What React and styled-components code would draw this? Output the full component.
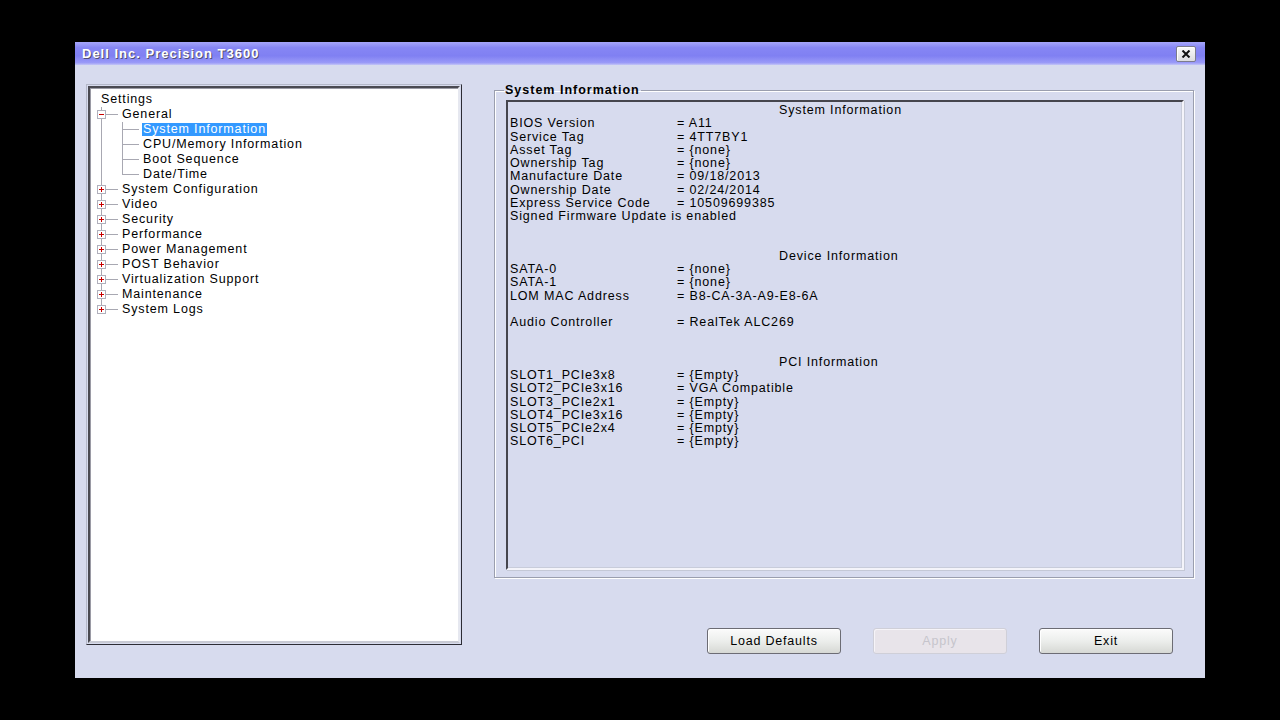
import React from 'react';
import styled, { createGlobalStyle } from 'styled-components';

// --- page ---
const GlobalStyle = createGlobalStyle`
  html, body {
    margin: 0;
    padding: 0;
    background: #000;
  }
  body {
    font-family: "Liberation Sans", Arial, sans-serif;
  }
`;

const Screen = styled.div`
  width: 1280px;
  height: 720px;
  box-sizing: border-box;
  padding: 42px 0 0 75px;
  background: #000;
`;

const Window = styled.div`
  width: 1130px;
  height: 636px;
  display: flex;
  flex-direction: column;
  background: #d7dbee;
`;

const TitleBar = styled.div`
  height: 23px;
  flex: none;
  display: flex;
  align-items: center;
  justify-content: space-between;
  padding: 0 9px 0 7px;
  background: linear-gradient(to bottom, #a6a6fa 0%, #8686f4 25%, #8080f2 60%, #9a9af8 90%, #c4c6f6 100%);
`;

const TitleText = styled.div`
  color: #fff;
  font-weight: bold;
  font-size: 13px;
  letter-spacing: 1px;
  text-shadow: 1px 1px 0 #505070;
`;

const CloseButton = styled.div`
  width: 18px;
  height: 14px;
  display: flex;
  align-items: center;
  justify-content: center;
  border: 1px solid #7c7c8c;
  border-radius: 2px;
  background: linear-gradient(to bottom, #fafafa, #dcdce0);
  box-shadow: inset 1px 1px 0 #fff;
`;

const Body = styled.div`
  flex: 1;
  display: grid;
  grid-template-columns: 376px 1fr;
  gap: 32px;
  padding: 19px 11px 0 11px;
`;

// --- left tree ---
const TreeFrame = styled.div`
  height: 561px;
  box-sizing: border-box;
  border: 1px solid;
  border-color: #b4b8c8 #2c2c34 #2c2c34 #b4b8c8;
  padding: 1px;
`;

const TreeBox = styled.div`
  height: 100%;
  box-sizing: border-box;
  border: 2px solid;
  border-color: #4a4a52 #e6e8f0 #c8cad4 #4a4a52;
  background: #fff;
  padding: 4px 0 0 3px;
  box-shadow: inset 1px 1px 0 #9a9aa4;
`;

const TreeRow = styled.div`
  display: flex;
  align-items: center;
  height: 15px;
`;

const TreeLabel = styled.span`
  margin-left: ${p => (p.$root ? 7 : 3)}px;
  padding: 0 1px;
  font-size: 12.5px;
  line-height: 13px;
  letter-spacing: 0.85px;
  white-space: nowrap;
  color: ${p => (p.$selected ? '#fff' : '#000')};
  background: ${p => (p.$selected ? '#3399ff' : 'transparent')};
`;

const LINE = '#a8a8b2';

const Connector = ({ kind, expander }) => (
  <svg width="25" height="15" style={{ display: 'block', flex: 'none' }} shapeRendering="crispEdges">
    {kind !== 'none' && (
      <rect x="8" y="0" width="1" height={kind === 'last' ? 8 : 15} fill={LINE} />
    )}
    {(kind === 'tee' || kind === 'last') && (
      <rect x="8" y="7" width="17" height="1" fill={LINE} />
    )}
    {expander && (
      <g>
        <rect x="4.5" y="3.5" width="8" height="8" fill="#fff" stroke="#b0b0bc" />
        <rect x="6" y="7" width="5" height="1" fill="#c80000" />
        {expander === 'plus' && <rect x="8" y="5" width="1" height="5" fill="#c80000" />}
      </g>
    )}
  </svg>
);

const PassCell = styled.div`
  width: 21px;
  height: 15px;
  flex: none;
  background: linear-gradient(${LINE}, ${LINE}) no-repeat 8px 0 / 1px 15px;
`;

const topLevel = [
  'System Configuration', 'Video', 'Security', 'Performance', 'Power Management',
  'POST Behavior', 'Virtualization Support', 'Maintenance', 'System Logs',
];

const generalChildren = ['System Information', 'CPU/Memory Information', 'Boot Sequence', 'Date/Time'];

// --- right side ---
const RightCol = styled.div`
  display: flex;
  flex-direction: column;
`;

const Group = styled.fieldset`
  margin: -1px 0 0 0;
  padding: 2px 9px 7px 11px;
  border: 1px solid #9a9eae;
  box-shadow: inset 1px 1px 0 #fff, 1px 1px 0 #fff;
  min-width: 0;
`;

const Legend = styled.legend`
  margin-left: -2px;
  padding: 0 1px;
  font-weight: bold;
  font-size: 12.5px;
  line-height: 15px;
  letter-spacing: 1px;
  color: #000;
`;

const InfoBox = styled.div`
  height: 470px;
  box-sizing: border-box;
  border: 2px solid;
  border-color: #45454d #f4f4fa #f4f4fa #45454d;
  box-shadow: 1px 1px 0 #c4c8d6, inset -1px -1px 0 #c8ccda;
  padding: 2px 2px 0 2px;
  font-size: 12.5px;
  letter-spacing: 0.85px;
  line-height: 13.25px;
  color: #000;
`;

const InfoRow = styled.div`
  display: grid;
  grid-template-columns: 167px 1fr;
  height: 13.25px;
  white-space: nowrap;
`;

const SectionTitle = styled.div`
  height: 13.25px;
  padding-left: 269px;
  white-space: nowrap;
`;

const Blank = styled.div`
  height: ${p => p.$lines * 13.25}px;
`;

const Line = styled.div`
  height: 13.25px;
  white-space: nowrap;
`;

const ButtonRow = styled.div`
  display: flex;
  justify-content: flex-end;
  gap: 32px;
  margin-top: 50px;
  padding-right: 21px;
`;

const Button = styled.div`
  width: 134px;
  height: 26px;
  box-sizing: border-box;
  display: flex;
  align-items: center;
  justify-content: center;
  font-size: 12.5px;
  letter-spacing: 0.8px;
  border-radius: 3px;
  border: 1px solid ${p => (p.$disabled ? '#cfcfd8' : '#6c6c74')};
  color: ${p => (p.$disabled ? '#c6c4cc' : '#000')};
  background: ${p => (p.$disabled
    ? '#e8e4ea'
    : 'linear-gradient(to bottom, #fbfbfb 0%, #eceeec 50%, #d6d8d4 100%)')};
  box-shadow: ${p => (p.$disabled ? 'inset 1px 1px 0 #f6f4f8' : 'inset 1px 1px 0 #fff')};
`;

const sysInfo = [
  ['BIOS Version', '= A11'],
  ['Service Tag', '= 4TT7BY1'],
  ['Asset Tag', '= {none}'],
  ['Ownership Tag', '= {none}'],
  ['Manufacture Date', '= 09/18/2013'],
  ['Ownership Date', '= 02/24/2014'],
  ['Express Service Code', '= 10509699385'],
];

const pciInfo = [
  ['SLOT1_PCIe3x8', '= {Empty}'],
  ['SLOT2_PCIe3x16', '= VGA Compatible'],
  ['SLOT3_PCIe2x1', '= {Empty}'],
  ['SLOT4_PCIe3x16', '= {Empty}'],
  ['SLOT5_PCIe2x4', '= {Empty}'],
  ['SLOT6_PCI', '= {Empty}'],
];

const Rows = ({ items }) => items.map(([k, v]) => (
  <InfoRow key={k}><span>{k}</span><span>{v}</span></InfoRow>
));

const App = () => (
  <Screen>
    <GlobalStyle />
    <Window>
      <TitleBar>
        <TitleText>Dell Inc. Precision T3600</TitleText>
        <CloseButton>
          <svg width="10" height="8" viewBox="0 0 10 8">
            <path d="M1.5 0.5 L8.5 7.5 M8.5 0.5 L1.5 7.5" stroke="#111" strokeWidth="2" />
          </svg>
        </CloseButton>
      </TitleBar>

      <Body>
        <TreeFrame>
          <TreeBox>
            <TreeRow><TreeLabel $root>Settings</TreeLabel></TreeRow>
            <TreeRow>
              <Connector kind="tee" expander="minus" />
              <TreeLabel>General</TreeLabel>
            </TreeRow>
            {generalChildren.map((c, i) => (
              <TreeRow key={c}>
                <PassCell />
                <Connector kind={i === generalChildren.length - 1 ? 'last' : 'tee'} />
                <TreeLabel $selected={i === 0}>{c}</TreeLabel>
              </TreeRow>
            ))}
            {topLevel.map((t, i) => (
              <TreeRow key={t}>
                <Connector kind={i === topLevel.length - 1 ? 'last' : 'tee'} expander="plus" />
                <TreeLabel>{t}</TreeLabel>
              </TreeRow>
            ))}
          </TreeBox>
        </TreeFrame>

        <RightCol>
          <Group>
            <Legend>System Information</Legend>
            <InfoBox>
              <SectionTitle>System Information</SectionTitle>
              <Rows items={sysInfo} />
              <Line>Signed Firmware Update is enabled</Line>
              <Blank $lines={2} />
              <SectionTitle>Device Information</SectionTitle>
              <Rows items={[['SATA-0', '= {none}'], ['SATA-1', '= {none}'], ['LOM MAC Address', '= B8-CA-3A-A9-E8-6A']]} />
              <Blank $lines={1} />
              <Rows items={[['Audio Controller', '= RealTek ALC269']]} />
              <Blank $lines={2} />
              <SectionTitle>PCI Information</SectionTitle>
              <Rows items={pciInfo} />
            </InfoBox>
          </Group>

          <ButtonRow>
            <Button>Load Defaults</Button>
            <Button $disabled>Apply</Button>
            <Button>Exit</Button>
          </ButtonRow>
        </RightCol>
      </Body>
    </Window>
  </Screen>
);

export default App;
